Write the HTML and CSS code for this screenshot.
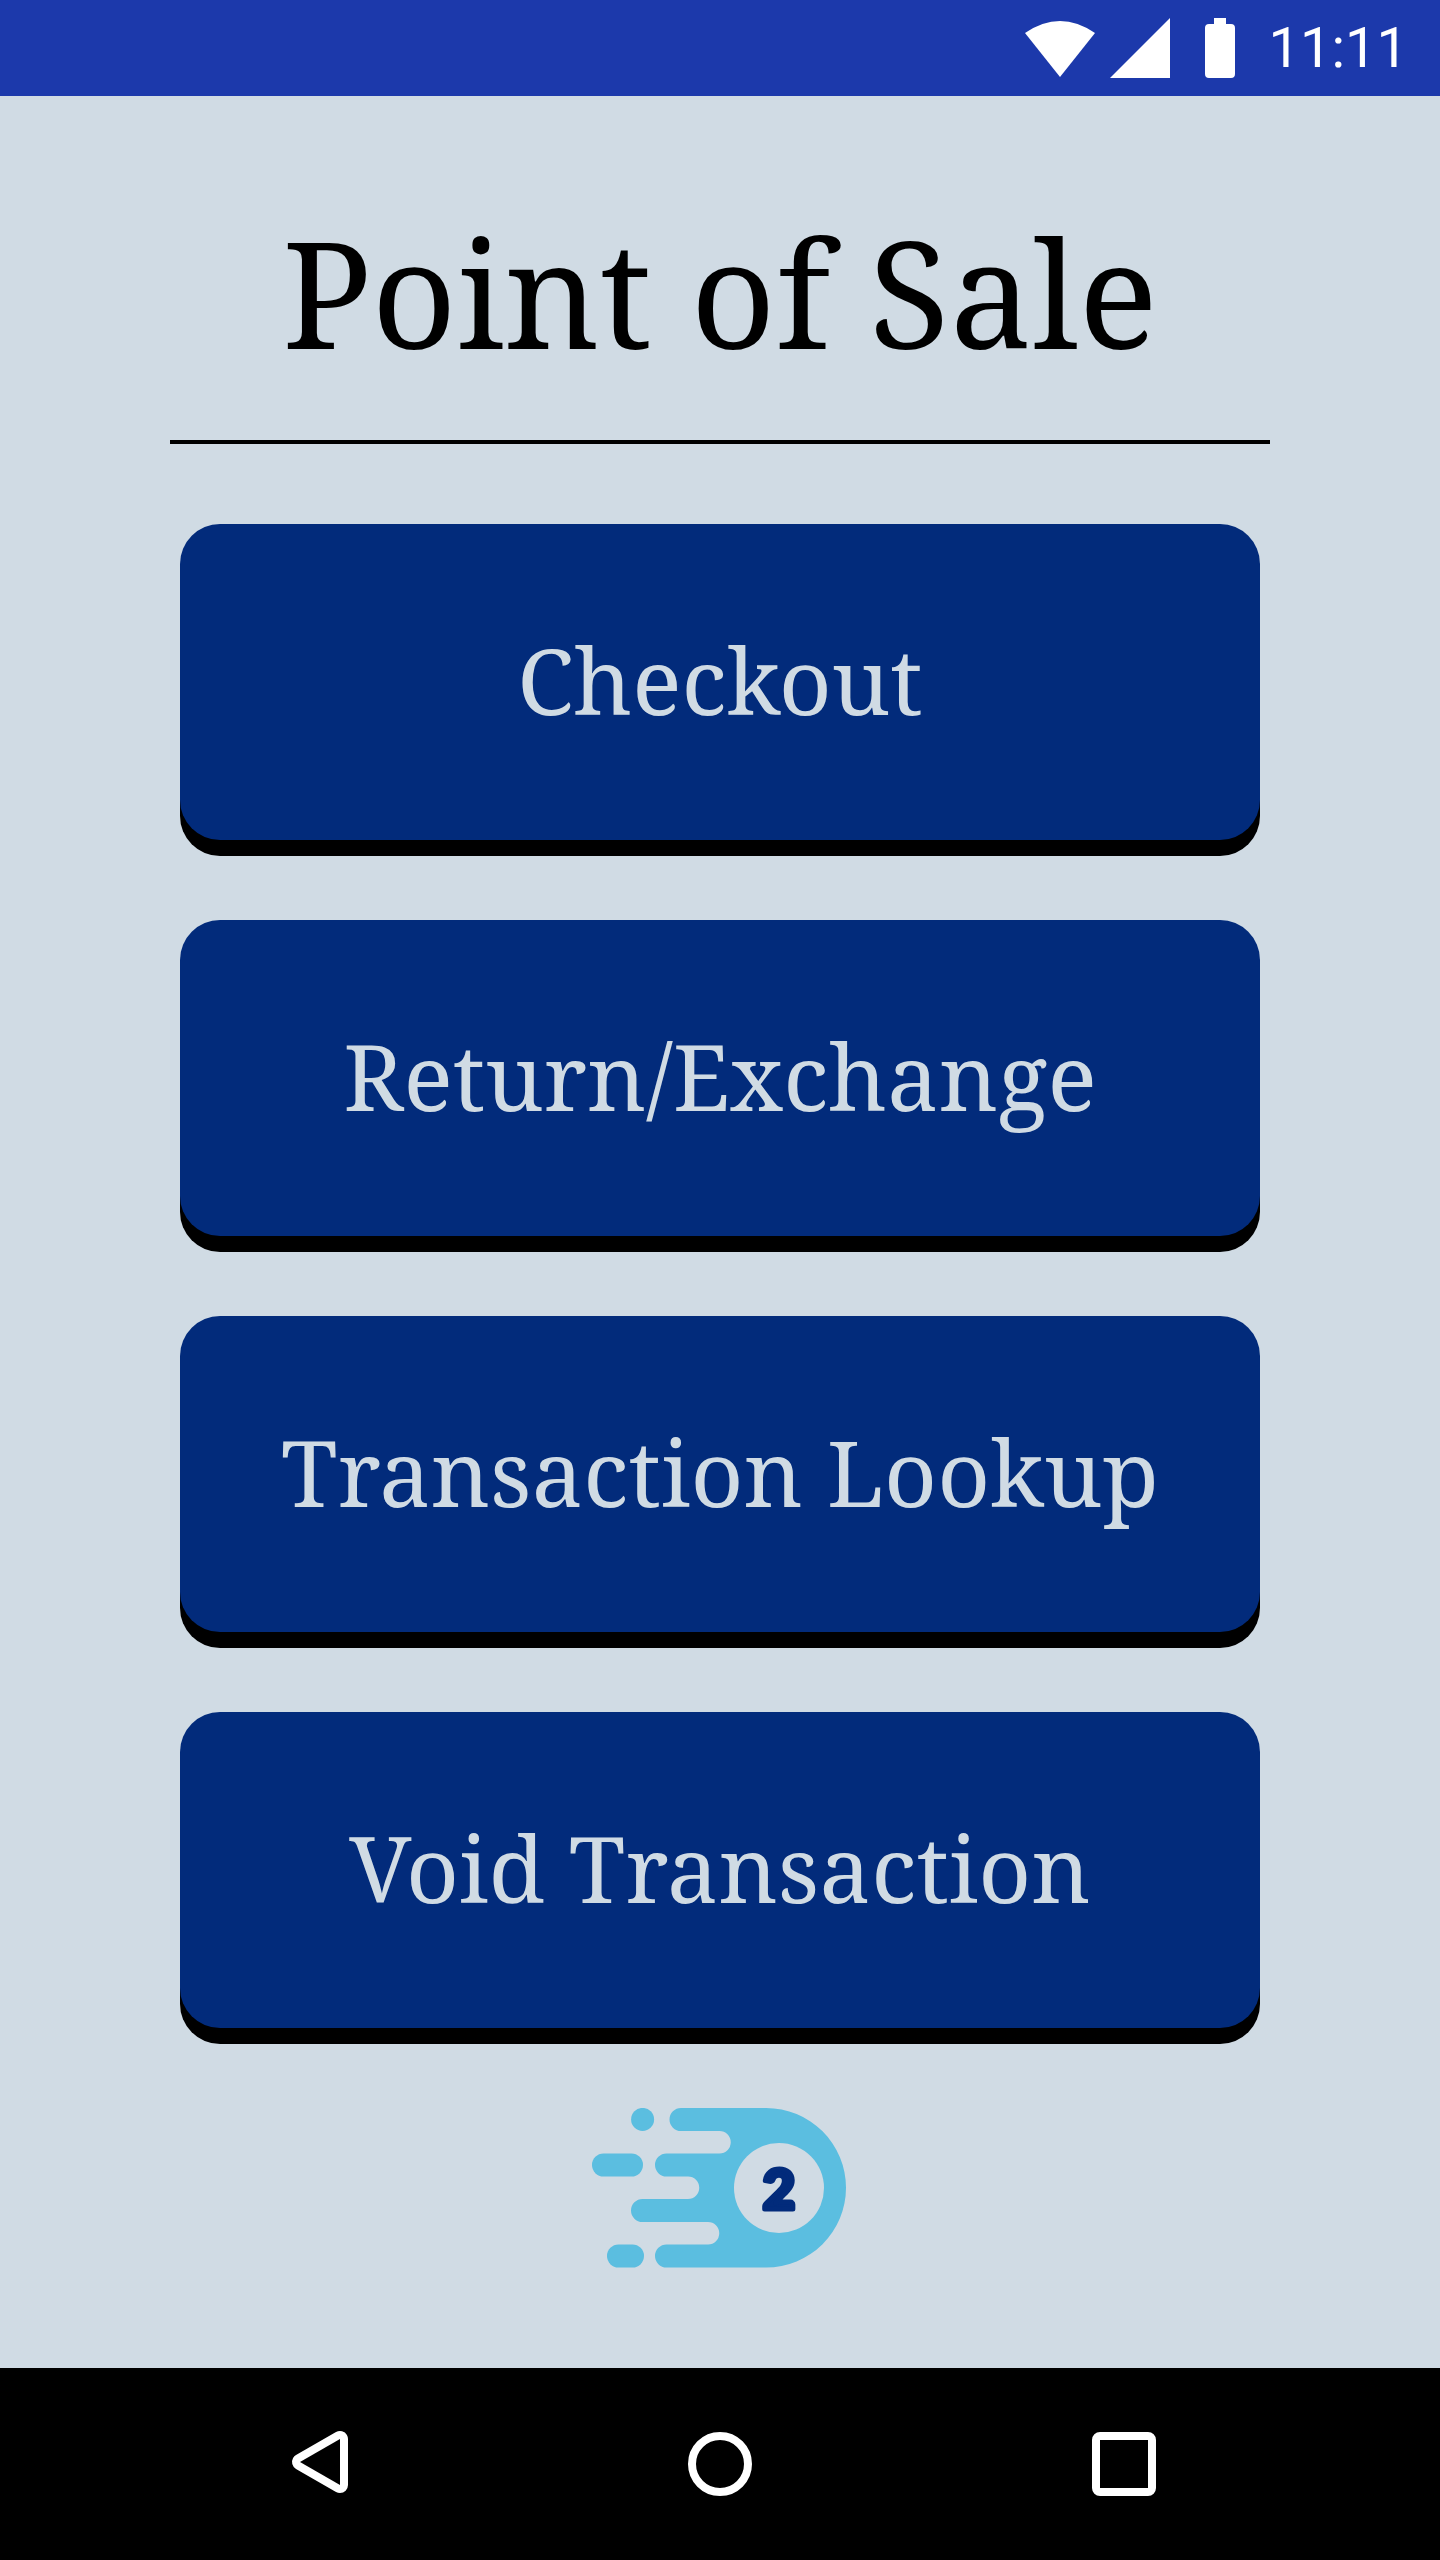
FILE: index.html
```html
<!DOCTYPE html>
<html lang="en">
<head>
  <meta charset="utf-8">
  <meta name="viewport" content="width=device-width, initial-scale=1">
  <title>Point of Sale</title>
  <link rel="stylesheet" href="styles.css">
</head>
<body>
  <header class="status-bar">
    <svg class="status-icons" viewBox="0 0 212 60" role="img" aria-label="Wi-Fi, signal and battery full">
      <path d="M0 15Q35-9 70 15L35 59Z"/>
      <path d="M85 60L145 0V60Z"/>
      <path d="M189 0h12v6h5q4 0 4 4v46q0 4-4 4h-22q-4 0-4-4V10q0-4 4-4h5z"/>
    </svg>
    <time class="clock">11:11</time>
  </header>

  <main class="screen">
    <h1 class="title">Point of Sale</h1>
    <nav class="menu" aria-label="Point of Sale">
      <button class="menu-button" type="button">Checkout</button>
      <button class="menu-button" type="button">Return/Exchange</button>
      <button class="menu-button" type="button">Transaction Lookup</button>
      <button class="menu-button" type="button">Void Transaction</button>
    </nav>
    <svg class="logo" viewBox="0 0 256 160" role="img" aria-label="2">
      <g fill="#5bbee0">
        <circle cx="50.6" cy="11.4" r="11.5"/>
        <rect x="0" y="45.5" width="51" height="23" rx="11.5"/>
        <rect x="15" y="136.5" width="37" height="23" rx="11.5"/>
        <path d="M89 0H174A80 79.75 0 0 1 174 159.5H74.5a11.5 11.5 0 0 1 0-23H116a11.25 11.25 0 0 0 0-22.5H50.5a11.5 11.5 0 0 1 0-23H96a11.25 11.25 0 0 0 0-22.5H74.5a11.5 11.5 0 0 1 0-23H127.500a11.25 11.25 0 0 0 0-22.5H89a11.5 11.5 0 0 1 0-23Z"/>
      </g>
      <circle cx="187" cy="80" r="45" fill="#d0dbe4"/>
      <text class="logo-number" x="187" y="101" text-anchor="middle">2</text>
    </svg>
  </main>

  <nav class="system-nav" aria-label="System">
    <button class="nav-button" type="button" aria-label="Back">
      <svg class="nav-icon" viewBox="0 0 64 64">
        <path d="M56 7V53L16 30Z" stroke-width="16" stroke-linejoin="round"/>
        <path d="M56 7V53L16 30Z" fill="#000" stroke="none"/>
      </svg>
    </button>
    <button class="nav-button" type="button" aria-label="Home">
      <svg class="nav-icon" viewBox="0 0 64 64"><circle cx="32" cy="32" r="28" stroke-width="8"/></svg>
    </button>
    <button class="nav-button" type="button" aria-label="Recent apps">
      <svg class="nav-icon" viewBox="0 0 64 64"><rect x="4" y="4" width="56" height="56" rx="4" stroke-width="8"/></svg>
    </button>
  </nav>
</body>
</html>
```

FILE: styles.css
```css
* {
  box-sizing: border-box;
}

body {
  margin: 0;
  min-height: 100vh;
  display: flex;
  flex-direction: column;
  background: #d0dbe4;
  font-family: "Noto Serif", "Droid Serif", "DejaVu Serif", serif;
}

.status-bar {
  height: 96px;
  padding: 0 32px;
  display: flex;
  align-items: center;
  justify-content: flex-end;
  gap: 32px;
  background: #1c39ab;
  color: #fff;
}

.status-icons {
  width: 212px;
  height: 60px;
  fill: currentColor;
}

.clock {
  font: 56px/64px Roboto, sans-serif;
}

.screen {
  flex: 1;
  display: flex;
  flex-direction: column;
  align-items: center;
  padding: 96px 170px 80px;
}

.title {
  width: 100%;
  margin: 0 0 80px;
  padding-bottom: 48px;
  border-bottom: 4px solid #000;
  color: #000;
  font-size: 148px;
  font-weight: 400;
  line-height: 200px;
  text-align: center;
}

.menu {
  width: 100%;
  padding: 0 10px;
  display: flex;
  flex-direction: column;
  gap: 80px;
}

.menu-button {
  width: 100%;
  min-height: 316px;
  padding: 0 16px 4px;
  border: 0;
  border-radius: 40px;
  background: #022b7b;
  box-shadow: 0 16px 0 #000;
  color: #d0dbe4;
  font: inherit;
  font-size: 92px;
  line-height: 120px;
}

.logo {
  width: 256px;
  height: 160px;
  margin-top: 80px;
}

.logo-number {
  fill: #022b7b;
  stroke: #022b7b;
  stroke-width: 5;
  stroke-linejoin: round;
  font: 900 56px Lato, sans-serif;
}

.system-nav {
  height: 192px;
  padding: 0 252px;
  display: flex;
  align-items: center;
  justify-content: space-between;
  background: #000;
}

.nav-button {
  display: flex;
  padding: 32px;
  border: 0;
  background: none;
  color: #fff;
}

.nav-icon {
  width: 64px;
  height: 64px;
  overflow: visible;
  fill: none;
  stroke: currentColor;
}
```
